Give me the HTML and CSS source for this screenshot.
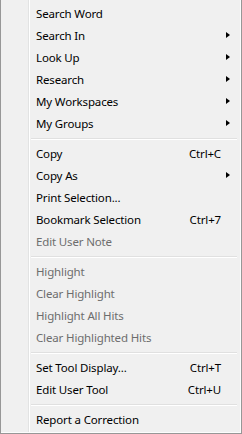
FILE: index.html
```html
<!DOCTYPE html>
<html lang="en">
<head>
  <meta charset="UTF-8">
  <title>Context Menu</title>
  <link rel="stylesheet" href="styles.css">
</head>
<body>
  <div class="menu">
    <div class="item">Search Word</div>
    <div class="item">Search In<span class="arrow"></span></div>
    <div class="item">Look Up<span class="arrow"></span></div>
    <div class="item">Research<span class="arrow"></span></div>
    <div class="item">My Workspaces<span class="arrow"></span></div>
    <div class="item">My Groups<span class="arrow"></span></div>
    <div class="sep"></div>
    <div class="item">Copy<span class="key">Ctrl+C</span></div>
    <div class="item">Copy As<span class="arrow"></span></div>
    <div class="item">Print Selection...</div>
    <div class="item">Bookmark Selection<span class="key">Ctrl+7</span></div>
    <div class="item disabled">Edit User Note</div>
    <div class="sep"></div>
    <div class="item disabled">Highlight</div>
    <div class="item disabled">Clear Highlight</div>
    <div class="item disabled">Highlight All Hits</div>
    <div class="item disabled">Clear Highlighted Hits</div>
    <div class="sep"></div>
    <div class="item">Set Tool Display...<span class="key">Ctrl+T</span></div>
    <div class="item">Edit User Tool<span class="key">Ctrl+U</span></div>
    <div class="sep"></div>
    <div class="item">Report a Correction</div>
  </div>
</body>
</html>
```

FILE: styles.css
```css
html, body {
  margin: 0;
  padding: 0;
}
body {
  font-family: "Noto Sans", "Open Sans", sans-serif;
  font-size: 11.5px;
  letter-spacing: -0.15px;
  color: #000;
}
.menu {
  width: 242px;
  height: 434px;
  box-sizing: border-box;
  border: 1px solid #979797;
  border-top: 0;
  padding: 3px 2px 2px 0;
  background:
    linear-gradient(to right, transparent 27px, #e2e3e3 27px, #e2e3e3 28px, #fff 28px, #fff 29px, transparent 29px),
    #f0f0f0;
  box-shadow: inset -1px -1px 0 #fcfcfc;
}
.item {
  height: 22px;
  box-sizing: border-box;
  display: flex;
  align-items: center;
  padding: 0 9px 2px 35px;
  white-space: nowrap;
}
.item.disabled {
  color: #6d6d6d;
}
.key {
  margin-left: auto;
  margin-right: 9px;
}
.arrow {
  margin-left: auto;
  width: 0;
  height: 0;
  border-top: 3.5px solid transparent;
  border-bottom: 3.5px solid transparent;
  border-left: 4px solid #000;
}
.sep {
  height: 8px;
  margin-left: 30px;
  margin-right: 2px;
  box-sizing: border-box;
  padding-top: 3px;
}
.sep::before {
  content: "";
  display: block;
  height: 1px;
  background: #e0e0e0;
  border-bottom: 1px solid #fff;
}
```
